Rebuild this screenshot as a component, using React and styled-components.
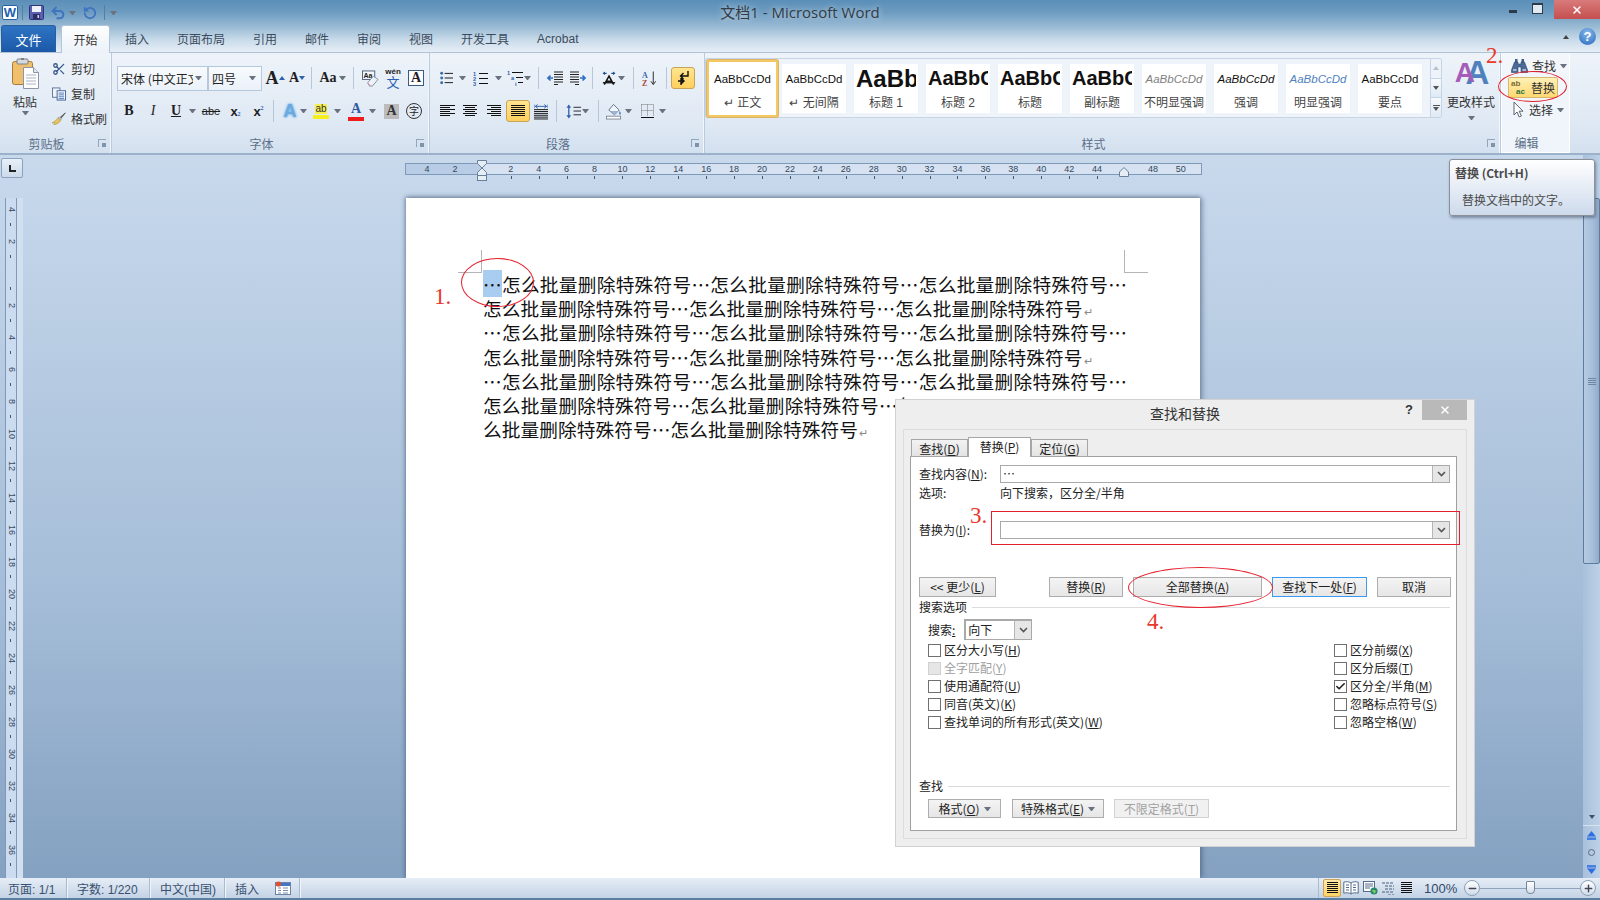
import React from "react";
import styled, { createGlobalStyle, css } from "styled-components";
import { Check, RotateCcw, Scissors, Undo2, Minus, Plus, X } from "lucide-react";

const GlobalStyle = createGlobalStyle`
  html, body { margin: 0; padding: 0; background: #fff; }
  * { box-sizing: border-box; }
`;

const UI_FONT = `"Liberation Sans", "Noto Sans CJK SC", sans-serif`;
const CJK_FONT = `"Noto Sans CJK SC", sans-serif`;

const Frame = styled.div`
  position: relative;
  width: 1600px;
  height: 900px;
  overflow: hidden;
  display: flex;
  flex-direction: column;
  font-family: ${UI_FONT};
  font-size: 12px;
  color: #333;
`;

/* ---------- title bar + tabs ---------- */

const Header = styled.div`
  height: 52px;
  flex-shrink: 0;
  background: linear-gradient(#5b8fb8 0, #6c9bc0 12px, #9dbdd6 28px, #c9dbea 40px, #e6eef6 52px);
`;

const TitleBar = styled.div`
  height: 25px;
  display: grid;
  grid-template-columns: 1fr auto 1fr;
  align-items: center;
`;

const QuickAccess = styled.div`
  display: flex;
  align-items: center;
  padding-left: 2px;
`;

const WordBadge = styled.span`
  width: 16px;
  height: 15px;
  background: #fff;
  border: 1px solid #2a62a8;
  border-radius: 2px;
  color: #1f5fb0;
  font: bold 13px/13px "Liberation Sans", sans-serif;
  text-align: center;
`;

const QatSep = styled.span`
  width: 1px;
  height: 15px;
  background: #dde8f2;
  border-right: 1px solid #567f9f;
  margin-left: ${(p) => p.$ml}px;
`;

const QatSlot = styled.span`
  display: flex;
  margin-left: ${(p) => p.$ml}px;
`;

const TitleText = styled.div`
  font-family: "Open Sans", "Noto Sans CJK SC", sans-serif;
  font-size: 15px;
  color: #333c46;
  text-shadow: 0 0 6px rgba(255, 255, 255, 0.7);
  margin-top: -2px;
`;

const WindowControls = styled.div`
  justify-self: end;
  align-self: start;
  display: flex;
  align-items: flex-start;
`;

const MinButton = styled.span`
  width: 8px;
  height: 3px;
  background: #2d3a4a;
  margin: 10px 15px 0 0;
`;

const RestoreButton = styled.span`
  width: 11px;
  height: 11px;
  border: 1px solid #2d3a4a;
  border-top-width: 2px;
  background: #dfe9f2;
  margin: 3px 11px 0 0;
`;

const CloseButton = styled.span`
  width: 46px;
  height: 19px;
  background: linear-gradient(#d97a7a, #c44f4f);
  color: #fff;
  display: flex;
  align-items: center;
  justify-content: center;
`;

const TabBar = styled.div`
  height: 27px;
  display: flex;
  align-items: stretch;
  padding-left: 1px;
  position: relative;
`;

const FileTab = styled.div`
  width: 55px;
  background: linear-gradient(#2f74c4, #1c58a8);
  border: 1px solid #2a5f9e;
  border-bottom: none;
  border-radius: 3px 3px 0 0;
  color: #fff;
  font-size: 13px;
  display: flex;
  align-items: center;
  justify-content: center;
  margin-right: 5px;
`;

const RibbonTab = styled.div`
  padding: 0 14px;
  display: flex;
  align-items: center;
  color: #3b4a5c;
  font-size: 12px;
  ${(p) =>
    p.$active &&
    css`
      width: 49px;
      padding: 0;
      justify-content: center;
      margin-right: 1px;
      color: #333;
      background: linear-gradient(#fff, #eaf1f8);
      border: 1px solid #b1c4d8;
      border-bottom: none;
      border-radius: 3px 3px 0 0;
      margin-bottom: -1px;
      position: relative;
      z-index: 1;
    `}
`;

const TabSpacer = styled.div`
  flex: 1;
`;

const HelpCluster = styled.div`
  display: flex;
  align-items: center;
  gap: 10px;
  padding: 0 4px 4px 0;
`;

const HelpBubble = styled.span`
  width: 17px;
  height: 17px;
  border-radius: 50%;
  background: radial-gradient(circle at 50% 30%, #8ab8ea, #2468bd);
  color: #fff;
  font: bold 13px/17px "Liberation Sans", sans-serif;
  text-align: center;
`;

/* ---------- ribbon ---------- */

const Ribbon = styled.div`
  height: 103px;
  flex-shrink: 0;
  display: flex;
  background: linear-gradient(#eef3f9, #dfe9f4 70%, #d3e0ef);
  border-top: 1px solid #aec3d8;
  border-bottom: 2px solid #9cb2cb;
`;

const Group = styled.div`
  width: ${(p) => p.$w}px;
  flex-shrink: 0;
  display: flex;
  flex-direction: column;
  border-right: 1px solid #b9cbdf;
  box-shadow: inset -1px 0 0 #f2f6fb;
  ${(p) =>
    p.$lit &&
    css`
      background: linear-gradient(#f3f7fc, #eef4fa);
      border: 1px solid #fff;
      border-top: none;
    `}
`;

const GroupBody = styled.div`
  flex: 1;
  min-height: 0;
  display: flex;
  flex-direction: ${(p) => p.$dir || "column"};
`;

const GroupFooter = styled.div`
  height: 20px;
  display: grid;
  grid-template-columns: 1fr 18px;
  align-items: center;
  text-align: center;
  color: #5b6f88;
  font-size: 12px;
`;

const Launcher = styled.span`
  width: 8px;
  height: 8px;
  border-left: 1px solid #93a5b9;
  border-top: 1px solid #93a5b9;
  position: relative;
  justify-self: center;
  &::after {
    content: "";
    position: absolute;
    right: 0;
    bottom: 0;
    width: 4px;
    height: 4px;
    background: #7f93a9;
  }
`;

const ToolRow = styled.div`
  height: 24px;
  display: flex;
  align-items: center;
  padding-left: ${(p) => p.$pl || 0}px;
  margin-top: ${(p) => p.$mt}px;
`;

const Tool = styled.span`
  width: ${(p) => p.$w}px;
  height: 22px;
  flex-shrink: 0;
  margin-left: ${(p) => p.$ml || 0}px;
  display: flex;
  flex-direction: ${(p) => p.$dir || "row"};
  align-items: center;
  justify-content: center;
  ${(p) =>
    p.$active &&
    css`
      background: linear-gradient(#ffe58f, #ffcf5c);
      border: 1px solid #c8a45a;
      border-radius: 3px;
    `}
`;

const Caret = styled.span`
  width: 7px;
  height: 4px;
  flex-shrink: 0;
  margin-left: ${(p) => p.$ml || 0}px;
  border-left: 3.5px solid transparent;
  border-right: 3.5px solid transparent;
  border-top: 4px solid #6a7280;
`;

const Sep = styled.span`
  width: 1px;
  height: 22px;
  flex-shrink: 0;
  margin-left: ${(p) => p.$ml || 0}px;
  background: #b6c7da;
`;

const Letter = styled.span`
  font-family: ${(p) => p.$family || `"Liberation Serif", serif`};
  font-size: ${(p) => p.$size}px;
  font-weight: ${(p) => p.$weight || "bold"};
  font-style: ${(p) => (p.$italic ? "italic" : "normal")};
  color: ${(p) => p.$color || "#1e1e1e"};
  line-height: 1;
  text-decoration: ${(p) => p.$deco || "none"};
  align-self: ${(p) => p.$align || "auto"};
  margin: ${(p) => (p.$align === "flex-start" ? "5px 0 0" : p.$align === "flex-end" ? "0 0 5px" : "0")};
  ${(p) => p.$glow && `text-shadow: 0 0 3px #6fb3ea, 0 0 2px #6fb3ea;`}
`;

const ColorBar = styled.span`
  width: 16px;
  height: 4px;
  background: ${(p) => p.$color};
  margin-top: 1px;
`;

const Marked = styled.span`
  background: #f6ef4c;
  font: 10px/10px "Liberation Sans", sans-serif;
  color: #333;
`;

const GreyChip = styled.span`
  width: 15px;
  height: 15px;
  background: #bcbcbc;
  display: flex;
  align-items: center;
  justify-content: center;
`;

const BoxChip = styled(GreyChip)`
  width: 16px;
  height: 16px;
  background: #fff;
  border: 1px solid #3c5a80;
`;

const RoundChip = styled.span`
  width: 16px;
  height: 16px;
  border: 1.5px solid #333;
  border-radius: 50%;
  font: 10px/13px ${CJK_FONT};
  text-align: center;
  color: #222;
`;

const Pinyin = styled.span`
  font: bold 8px/8px "Liberation Sans", sans-serif;
  color: #222;
`;

const PinyinChar = styled.span`
  font: 13px/12px ${CJK_FONT};
  color: #2a5db0;
`;

const Combo = styled.div`
  width: ${(p) => p.$w}px;
  height: 25px;
  background: linear-gradient(#f8fbfe, #eaf1f8);
  border: 1px solid #b6c8db;
  display: flex;
  align-items: center;
  justify-content: space-between;
  padding: 0 5px 0 3px;
  font-size: 12px;
  color: #222;
  font-family: ${CJK_FONT};
  overflow: hidden;
  white-space: nowrap;
`;

const ComboText = styled.span`
  width: ${(p) => p.$w}px;
  overflow: hidden;
`;

/* clipboard */

const PasteButton = styled.div`
  width: 50px;
  display: flex;
  flex-direction: column;
  align-items: center;
  padding-top: 5px;
`;

const PasteLabel = styled.span`
  margin-top: 6px;
  font-size: 12px;
  line-height: 16px;
  color: #333;
`;

const ClipColumn = styled.div`
  padding-top: 3px;
  display: flex;
  flex-direction: column;
`;

const ClipItem = styled.div`
  height: 25px;
  display: flex;
  align-items: center;
  gap: 5px;
  padding-left: 2px;
  color: #333;
`;

const ClipSlot = styled.span`
  width: 14px;
  display: flex;
  justify-content: center;
`;

/* style gallery */

const Gallery = styled.div`
  width: 737px;
  height: 60px;
  margin-top: 5px;
  background: #eff4fa;
  border: 1px solid #c5d5e6;
  border-radius: 2px;
  display: flex;
  align-items: center;
  padding-left: 1px;
  gap: 8px;
`;

const StyleItem = styled.div`
  width: ${(p) => (p.$active ? 71 : 64)}px;
  height: ${(p) => (p.$active ? 57 : 49)}px;
  margin-right: ${(p) => (p.$active ? -4 : 0)}px;
  background: #fff;
  flex-shrink: 0;
  display: flex;
  flex-direction: column;
  align-items: center;
  overflow: hidden;
  ${(p) =>
    p.$active &&
    css`
      border: 2px solid #f4c965;
      border-radius: 2px;
      box-shadow: 0 0 0 1px #d9b469;
    `}
`;

const StyleSample = styled.div`
  height: 30px;
  margin-top: ${(p) => (p.$active ? 2 : 0)}px;
  width: 60px;
  text-align: center;
  overflow: hidden;
  white-space: nowrap;
  display: flex;
  align-items: center;
  justify-content: ${(p) => (p.$clip ? "flex-start" : "center")};
  font-family: "Liberation Sans", sans-serif;
  font-size: ${(p) => p.$size}px;
  font-weight: ${(p) => (p.$bold ? "bold" : "normal")};
  font-style: ${(p) => (p.$italic ? "italic" : "normal")};
  color: ${(p) => p.$color || "#111"};
`;

const StyleLabel = styled.div`
  font-size: 12px;
  line-height: 18px;
  color: #444;
  white-space: nowrap;
`;

const GalleryScroller = styled.div`
  margin-left: auto;
  width: 14px;
  height: 100%;
  display: flex;
  flex-direction: column;
  border-left: 1px solid #c5d5e6;
`;

const ScrollStep = styled.div`
  flex: 1;
  display: flex;
  flex-direction: column;
  align-items: center;
  justify-content: center;
  gap: 1px;
  background: ${(p) => (p.$on ? "linear-gradient(#f7fafd,#dfe9f4)" : "#eef3f9")};
  border-bottom: 1px solid #c5d5e6;
  &:last-child {
    border-bottom: none;
  }
`;

const StepBar = styled.span`
  width: 7px;
  height: 1px;
  background: #555;
`;

const StepArrow = styled.span`
  border-left: 3px solid transparent;
  border-right: 3px solid transparent;
  ${(p) =>
    p.$up
      ? `border-bottom: 4px solid ${p.$color};`
      : `border-top: 4px solid ${p.$color};`}
`;

const StyleArea = styled.div`
  display: flex;
`;

const ChangeStyles = styled.div`
  width: 58px;
  display: flex;
  flex-direction: column;
  align-items: center;
  margin-left: 0;
  padding-top: 5px;
`;

const BigLetters = styled.div`
  display: flex;
  font: bold 33px/30px "Liberation Sans", sans-serif;
  height: 32px;
`;

const BigA = styled.span`
  color: ${(p) => p.$color};
  margin-left: ${(p) => p.$ml || 0}px;
  transform: ${(p) => (p.$small ? "scale(0.85) translateY(-1px)" : "none")};
`;

const ChangeLabel = styled.span`
  margin-top: 5px;
  line-height: 16px;
  margin-bottom: 5px;
`;

/* edit group */

const EditColumn = styled.div`
  display: flex;
  flex-direction: column;
  padding: 2px 0 0 6px;
`;

const EditItem = styled.div`
  width: ${(p) => (p.$active ? 50 : 60)}px;
  height: 21px;
  margin-top: ${(p) => p.$mt || 0}px;
  display: flex;
  align-items: center;
  gap: 4px;
  padding-left: ${(p) => p.$pl || 2}px;
  color: #333;
  white-space: nowrap;
  ${(p) =>
    p.$active &&
    css`
      background: linear-gradient(#fff1b8, #ffd870);
      border: 1px solid #d8b66c;
      border-radius: 2px;
    `}
`;

const AbAc = styled.span`
  width: 16px;
  display: flex;
  flex-direction: column;
  font: bold 8px/8px "Liberation Sans", sans-serif;
  color: #7a6a33;
`;

const AcPart = styled.span`
  color: #27733f;
  padding-left: 5px;
`;

/* ---------- workspace ---------- */

const Workspace = styled.div`
  flex: 1;
  min-height: 0;
  display: grid;
  grid-template-columns: 1fr 17px;
  background: linear-gradient(#c8d9ec, #a5bdd8 60%, #84a1c1);
`;

const DocColumn = styled.div`
  min-width: 0;
  min-height: 0;
  display: flex;
  flex-direction: column;
`;

const RulerStrip = styled.div`
  height: 43px;
  flex-shrink: 0;
  display: flex;
  align-items: flex-start;
`;

const TabStopButton = styled.div`
  width: 22px;
  height: 20px;
  margin: 3px 0 0 1px;
  background: linear-gradient(#e8f0f8, #cbdaeb);
  border: 1px solid #8ca3bd;
  border-radius: 2px;
  display: flex;
  align-items: center;
  justify-content: center;
`;

const TabStopMark = styled.span`
  width: 7px;
  height: 7px;
  border-left: 2px solid #222;
  border-bottom: 2px solid #222;
`;

const HRuler = styled.div`
  width: 797px;
  height: 12px;
  margin: 8px 0 0 382px;
  display: flex;
  padding-left: 7px;
  background: linear-gradient(90deg, #b8cde5 0 77px, #d6e2f1 77px);
  border: 1px solid #7f99b8;
  font: 9px/10px "Liberation Sans", sans-serif;
  color: #34465c;
`;

const HCell = styled.span`
  position: relative;
  width: 27.93px;
  flex-shrink: 0;
  text-align: center;
  ${(p) =>
    p.$tick &&
    css`
      &::after {
        content: "";
        position: absolute;
        left: 50%;
        top: 12px;
        width: 1px;
        height: 3px;
        background: #44586f;
      }
    `}
`;

const RulerMark = styled.svg`
  position: absolute;
  left: 8px;
  top: ${(p) => p.$top}px;
`;

const DocBody = styled.div`
  flex: 1;
  min-height: 0;
  display: flex;
`;

const VRulerBand = styled.div`
  width: 23px;
  flex-shrink: 0;
  padding-left: 5px;
  overflow: hidden;
`;

const VRuler = styled.div`
  width: 18px;
  height: 100%;
  border-right: 6px solid #d1dfef;
  background: #ccdcf0;
  box-shadow: inset 1px 0 0 #7f99b8, inset -1px 0 0 #7f99b8;
  display: flex;
  flex-direction: column;
  overflow: hidden;
  font: 9px/9px "Liberation Sans", sans-serif;
  color: #34465c;
`;

const VCell = styled.span`
  height: 32px;
  flex-shrink: 0;
  display: flex;
  align-items: center;
  justify-content: center;
  writing-mode: vertical-rl;
  position: relative;
  &:first-child {
    margin-top: -4px;
  }
  &::after {
    content: "";
    position: absolute;
    bottom: 0;
    left: 5px;
    width: 1px;
    height: 3px;
    background: #44586f;
  }
`;

const PageArea = styled.div`
  flex: 1;
  min-width: 0;
  padding-left: 383px;
`;

const Page = styled.div`
  width: 794px;
  height: 100%;
  background: #fff;
  padding: 52px 0 0 52px;
  box-shadow: -1px 0 4px rgba(60, 80, 110, 0.45), 3px 0 5px rgba(60, 80, 110, 0.35),
    0 -2px 4px rgba(60, 80, 110, 0.25);
`;

const CropRow = styled.div`
  width: 690px;
  height: 23px;
  display: flex;
  justify-content: space-between;
`;

const CropMark = styled.span`
  width: 24px;
  height: 23px;
  border-bottom: 1px solid #b5b5b5;
  ${(p) => (p.$right ? "border-left: 1px solid #b5b5b5;" : "border-right: 1px solid #b5b5b5;")}
`;

const DocText = styled.div`
  padding-left: 25px;
  margin-top: -1px;
  font-family: ${CJK_FONT};
  font-size: 18.67px;
  color: #111;
`;

const DocLine = styled.div`
  height: 24.2px;
  line-height: 24.2px;
  white-space: nowrap;
  letter-spacing: ${(p) => p.$spacing || 0}px;
`;

const Selected = styled.span`
  background: #a9cdf0;
`;

const ParaMark = styled.span`
  font-size: 11px;
  color: #8a8a8a;
  margin-left: 1px;
`;

/* scroll bar */

const ScrollBar = styled.div`
  display: flex;
  flex-direction: column;
  align-items: stretch;
  background: linear-gradient(90deg, #a9c0db, #bdd1e8);
`;

const ScrollThumb = styled.div`
  height: 366px;
  margin-top: 43px;
  flex-shrink: 0;
  background: linear-gradient(90deg, #b5cbe4, #a6bdd9 60%, #90aac8);
  border: 1px solid #5d7c9f;
  border-radius: 2px;
  display: flex;
  align-items: center;
  justify-content: center;
`;

const Grip = styled.span`
  width: 8px;
  height: 7px;
  background: repeating-linear-gradient(#6f86a1 0 1px, transparent 1px 2px);
`;

const ScrollSpacer = styled.div`
  flex: 1;
`;

const ScrollButton = styled.div`
  height: ${(p) => p.$h}px;
  display: flex;
  align-items: center;
  justify-content: center;
  border-bottom: ${(p) => (p.$line ? "1px solid #d7e2ef" : "none")};
`;

const BrowseDot = styled.span`
  width: 7px;
  height: 7px;
  border: 1px solid #5c6b80;
  border-radius: 50%;
`;

/* ---------- status bar ---------- */

const StatusBar = styled.div`
  height: 22px;
  flex-shrink: 0;
  background: linear-gradient(#e6edf6, #d3dfed 50%, #c3d2e5 91%, #5b7f9e 91%);
  display: flex;
  align-items: flex-start;
  font-size: 12px;
  color: #38506f;
`;

const StatusCell = styled.div`
  width: ${(p) => p.$w}px;
  height: 20px;
  display: flex;
  align-items: center;
  gap: 16px;
  padding-left: ${(p) => p.$pl}px;
  border-right: 1px solid #a8bbd1;
  box-shadow: 1px 0 0 #f0f5fa;
  white-space: nowrap;
`;

const StatusFill = styled.div`
  flex: 1;
`;

const ViewCluster = styled.div`
  height: 20px;
  display: flex;
  align-items: center;
  border-left: 1px solid #a8bbd1;
  padding: 0 4px;
`;

const ViewButton = styled.span`
  width: ${(p) => p.$w}px;
  height: 18px;
  flex-shrink: 0;
  display: flex;
  align-items: center;
  justify-content: center;
  ${(p) =>
    p.$active &&
    css`
      background: linear-gradient(#ffe9a6, #ffd264);
      border: 1px solid #cda457;
      border-radius: 2px;
    `}
`;

const ZoomText = styled.span`
  font-size: 13px;
  color: #33496a;
  margin-left: 9px;
  width: 40px;
`;

const ZoomRound = styled.span`
  width: 16px;
  height: 16px;
  border-radius: 50%;
  background: linear-gradient(#fff, #cfdbe9);
  border: 1px solid #8e9fb4;
  color: #445;
  display: flex;
  align-items: center;
  justify-content: center;
  flex-shrink: 0;
`;

const ZoomTrack = styled.span`
  width: 100px;
  height: 1px;
  background: #8ea2b9;
  position: relative;
`;

const ZoomKnob = styled.span`
  position: absolute;
  left: 46px;
  top: -7px;
  width: 9px;
  height: 13px;
  background: linear-gradient(#fff, #d5dfeb);
  border: 1px solid #74869c;
  border-radius: 1px 1px 4px 4px;
`;

/* ---------- find & replace dialog ---------- */

const Dialog = styled.div`
  position: absolute;
  left: 895px;
  top: 399px;
  width: 580px;
  height: 448px;
  background: #eeeeee;
  border: 1px solid #d2d2d2;
  display: flex;
  flex-direction: column;
  padding: 0 7px 7px 7px;
  font-family: ${CJK_FONT};
  font-size: 12px;
  line-height: 18px;
  color: #222;
`;

const DialogTitle = styled.div`
  height: 29px;
  flex-shrink: 0;
  display: grid;
  grid-template-columns: 1fr auto 1fr;
  align-items: center;
  padding-bottom: 3px;
  font-size: 14px;
  color: #333;
`;

const DialogTitleActions = styled.div`
  grid-column: 3;
  justify-self: end;
  align-self: start;
  display: flex;
  align-items: center;
`;

const HelpMark = styled.span`
  font: bold 13px/20px "Liberation Sans", sans-serif;
  margin-right: 9px;
  color: #333;
`;

const DialogClose = styled.span`
  width: 45px;
  height: 20px;
  background: #b9b9b9;
  color: #fff;
  display: flex;
  align-items: center;
  justify-content: center;
`;

const DialogInner = styled.div`
  flex: 1;
  min-height: 0;
  display: flex;
  flex-direction: column;
  border: 1px solid #dcdcdc;
  padding: 7px 9px 7px 6px;
`;

const DialogTabs = styled.div`
  display: flex;
  align-items: flex-end;
  height: 20px;
  padding-left: 1px;
  position: relative;
  z-index: 1;
`;

const DialogTab = styled.div`
  width: ${(p) => p.$w}px;
  height: ${(p) => (p.$active ? 20 : 18)}px;
  background: ${(p) => (p.$active ? "#fff" : "linear-gradient(#f2f2f2, #e4e4e4)")};
  border: 1px solid #a6a6a6;
  border-bottom: ${(p) => (p.$active ? "none" : "1px solid #a6a6a6")};
  text-align: center;
  line-height: 17px;
`;

const Panel = styled.div`
  flex: 1;
  min-height: 0;
  background: #fff;
  border: 1px solid #a0a0a0;
  padding: 8px 6px 0 8px;
  margin-top: -1px;
`;

const FieldRow = styled.div`
  display: grid;
  grid-template-columns: 81px 1fr;
  align-items: center;
  height: ${(p) => p.$h || 18}px;
  margin-top: ${(p) => p.$mt || 0}px;
`;

const DropBox = styled.div`
  height: 18px;
  width: ${(p) => (p.$w ? `${p.$w}px` : "auto")};
  border: 1px solid #a9a9a9;
  background: #fff;
  display: flex;
  align-items: center;
  justify-content: space-between;
  padding-left: 2px;
`;

const DropArrow = styled.span`
  width: 17px;
  height: 100%;
  background: #e6e6e6;
  border-left: 1px solid #b5b5b5;
  display: flex;
  align-items: center;
  justify-content: center;
  color: #555;
`;

const ButtonRow = styled.div`
  display: flex;
  align-items: center;
  margin-top: ${(p) => p.$mt}px;
  padding-left: ${(p) => p.$pl || 0}px;
`;

const DlgButton = styled.div`
  width: ${(p) => p.$w}px;
  height: ${(p) => p.$h || 20}px;
  margin-left: ${(p) => p.$ml || 0}px;
  flex-shrink: 0;
  border: 1px solid ${(p) => (p.$focus ? "#3c9bf0" : p.$off ? "#d2d2d2" : "#adadad")};
  background: ${(p) => (p.$off ? "#f1f1f1" : "linear-gradient(#f4f4f4, #e6e6e6)")};
  color: ${(p) => (p.$off ? "#a2a2a2" : "#222")};
  display: flex;
  align-items: center;
  justify-content: center;
  gap: 4px;
  white-space: nowrap;
`;

const SectionHead = styled.div`
  display: flex;
  align-items: center;
  gap: 5px;
  height: 18px;
  margin-top: ${(p) => p.$mt}px;
  &::after {
    content: "";
    flex: 1;
    height: 1px;
    background: #dcdcdc;
  }
`;

const SearchRow = styled.div`
  display: flex;
  align-items: center;
  gap: 9px;
  margin-top: 3px;
  padding-left: 9px;
`;

const SearchSelect = styled(DropBox)`
  height: 21px;
  border-width: 2px 1px 1px 2px;
`;

const ChecksGrid = styled.div`
  display: grid;
  grid-template-columns: 406px 1fr;
  margin-top: 1px;
  padding-left: 9px;
`;

const CheckRow = styled.div`
  height: 18px;
  display: flex;
  align-items: center;
  gap: 3px;
  color: ${(p) => (p.$off ? "#a0a0a0" : "#222")};
`;

const CheckBox = styled.span`
  width: 13px;
  height: 13px;
  flex-shrink: 0;
  border: 1px solid ${(p) => (p.$off ? "#d0d0d0" : "#707070")};
  background: ${(p) => (p.$off ? "#e6e6e6" : "#fff")};
  display: flex;
  align-items: center;
  justify-content: center;
`;

const Accel = styled.u`
  text-underline-offset: 1px;
`;

/* ---------- tooltip ---------- */

const Tooltip = styled.div`
  position: absolute;
  left: 1449px;
  top: 159px;
  width: 146px;
  height: 57px;
  border: 1px solid #8a8f98;
  border-radius: 3px;
  background: linear-gradient(#fff, #cddaec);
  box-shadow: 1px 2px 3px rgba(40, 50, 70, 0.45);
  padding: 4px 0 0 5px;
  color: #4a4a4a;
  font-family: ${CJK_FONT};
  font-size: 12px;
  line-height: 18px;
`;

const TooltipTitle = styled.div`
  font-weight: bold;
`;

const TooltipText = styled.div`
  margin: 9px 0 0 7px;
`;

/* ---------- red notes drawn on the screenshot ---------- */

const NoteNumber = styled.span`
  position: absolute;
  left: ${(p) => p.$x}px;
  top: ${(p) => p.$y}px;
  font: 23px/26px "Liberation Serif", serif;
  color: #e8392a;
  z-index: 5;
`;

const NoteRing = styled.span`
  position: absolute;
  left: ${(p) => p.$x}px;
  top: ${(p) => p.$y}px;
  width: ${(p) => p.$w}px;
  height: ${(p) => p.$h}px;
  border: 1px solid #e5202e;
  border-radius: ${(p) => (p.$square ? 0 : "50%")};
  z-index: 5;
`;

/* ---------- drawings ---------- */

const SaveIcon = () => (
  <svg width="15" height="15" viewBox="0 0 15 15">
    <rect x="0.5" y="0.5" width="14" height="14" rx="1" fill="#5a5fb0" stroke="#2f3478" />
    <rect x="3" y="1" width="9" height="6" fill="#eef0fa" />
    <rect x="4" y="9" width="7" height="5" fill="#2b2f66" />
    <rect x="8.5" y="10" width="1.6" height="3" fill="#cfd3ee" />
  </svg>
);

const PasteIcon = () => (
  <svg width="27" height="31" viewBox="0 0 27 31">
    <rect x="0.5" y="3.5" width="20" height="23" rx="2" fill="#f0bf6d" stroke="#a67c37" />
    <rect x="5" y="1" width="11" height="5" rx="1" fill="#d6d9de" stroke="#7a7f88" />
    <rect x="9" y="0" width="3" height="2" fill="#7a7f88" />
    <path d="M11.5 9.5h10l5 5v16h-15z" fill="#fff" stroke="#8b97a8" />
    <path d="M21.5 9.5v5h5" fill="#dfe6ee" stroke="#8b97a8" />
    <path d="M14 17h10M14 20h10M14 23h10M14 26h10" stroke="#a8b3c2" />
  </svg>
);

const CopyIcon = () => (
  <svg width="15" height="14" viewBox="0 0 15 14">
    <rect x="0.5" y="0.5" width="8" height="10" fill="#eef3fa" stroke="#5b7497" />
    <rect x="5.5" y="3.5" width="9" height="10" fill="#fff" stroke="#3f6096" />
    <path d="M7 6h6M7 8h6M7 10h6M7 12h6" stroke="#3f6db0" />
  </svg>
);

const BrushIcon = () => (
  <svg width="16" height="15" viewBox="0 0 16 15">
    <path d="M9 6l6-5.5 .8 .8L10.5 7.5z" fill="#5a5a5a" />
    <path d="M8.5 5.5l2.5 2.5-1.5 1.5-2.5-2.5z" fill="#c7ccd4" stroke="#777" strokeWidth=".5" />
    <path d="M7 6.5l3 3c-1.5 3-4 4.5-8 5 .8-.8 1-1.5 1-2.2l-3 .4c2.5-1.5 5-3.5 7-6.2z" fill="#e6c35a" stroke="#9a7b2b" strokeWidth=".5" />
  </svg>
);

const ClearIcon = () => (
  <svg width="18" height="17" viewBox="0 0 18 17">
    <rect x="0.5" y="0.5" width="13" height="9" fill="#f3f6fa" stroke="#4d6079" />
    <text x="1.6" y="8" fontSize="7.5" fontWeight="bold" fontFamily="Liberation Sans" fill="#222">Aa</text>
    <path d="M6 13l6-7 5 3.5-6 7h-3z" fill="#eef1f6" stroke="#7c8ea6" />
    <path d="M6 13l3 3.5" stroke="#e38aa0" />
  </svg>
);

const Bullets = () => (
  <svg width="14" height="14" viewBox="0 0 14 14">
    {[2, 7, 12].map((y) => (
      <g key={y}>
        <circle cx="1.8" cy={y} r="1.6" fill="#3c6ea8" />
        <rect x="5" y={y - 0.5} width="9" height="1" fill="#111" />
      </g>
    ))}
  </svg>
);

const Numbers = () => (
  <svg width="15" height="15" viewBox="0 0 15 15">
    {[1, 2, 3].map((n) => (
      <g key={n}>
        <text x="0" y={n * 5 - 0.2} fontSize="5.6" fontWeight="bold" fontFamily="Liberation Sans" fill="#2f62a8">{n}</text>
        <rect x="6" y={n * 5 - 3} width="9" height="1" fill="#111" />
      </g>
    ))}
  </svg>
);

const MultiLevel = () => (
  <svg width="16" height="16" viewBox="0 0 16 16">
    <text x="0" y="5" fontSize="5.6" fontWeight="bold" fontFamily="Liberation Sans" fill="#2f62a8">1</text>
    <rect x="5" y="2" width="11" height="1" fill="#111" />
    <text x="4" y="10" fontSize="5.6" fontWeight="bold" fontFamily="Liberation Sans" fill="#2f62a8">a</text>
    <rect x="9" y="7" width="7" height="1" fill="#111" />
    <text x="8" y="15.5" fontSize="5.6" fontWeight="bold" fontFamily="Liberation Sans" fill="#2f62a8">i</text>
    <rect x="11" y="12" width="5" height="1" fill="#111" />
  </svg>
);

const IndentIcon = ({ flip }) => (
  <svg width="16" height="14" viewBox="0 0 16 14" style={flip ? { transform: "scaleX(-1)" } : undefined}>
    <path d="M7 1h9M7 3.5h9M7 6h9M7 8.5h9M7 11h9M7 13.5h4" stroke="#222" />
    <path d="M6 7H1m2.5-2.5L1 7l2.5 2.5" stroke="#2f6ec4" strokeWidth="1.6" fill="none" />
  </svg>
);

const TextDirIcon = () => (
  <svg width="17" height="15" viewBox="0 0 17 15">
    <path d="M2 2h4M15 2h-4" stroke="#1f4e96" strokeWidth="1.2" />
    <path d="M2 2l2.2-2v4zM15 2l-2.2-2v4z" fill="#1f4e96" />
    <path d="M2 12h13" stroke="#111" strokeWidth="1.4" />
    <path d="M3.5 14l5-9 5 9M5.5 10.5h6" stroke="#111" strokeWidth="1.6" fill="none" />
  </svg>
);

const SortIcon = () => (
  <svg width="16" height="17" viewBox="0 0 16 17">
    <text x="0" y="7.5" fontSize="8.5" fontWeight="bold" fontFamily="Liberation Serif" fill="#3a6aa8">A</text>
    <text x="0" y="16" fontSize="8.5" fontWeight="bold" fontFamily="Liberation Serif" fill="#a84a3c">Z</text>
    <path d="M12 1v13" stroke="#222" />
    <path d="M9.5 11.5L12 15l2.5-3.5" stroke="#222" fill="none" />
  </svg>
);

const MarksIcon = () => (
  <svg width="14" height="16" viewBox="0 0 14 16">
    <path d="M12 1v5H5M7.5 3L4.5 6l3 3" stroke="#111" strokeWidth="1.4" fill="none" />
    <path d="M2 11h6M5.5 8.5L8 11l-2.5 2.5M5 8v7" stroke="#111" strokeWidth="1.4" fill="none" />
  </svg>
);

const LinesIcon = ({ widths, align = "left", w = 15, gap = 2 }) => (
  <svg width={w} height={widths.length * gap} viewBox={`0 0 ${w} ${widths.length * gap}`}>
    {widths.map((lw, i) => (
      <rect
        key={i}
        x={align === "left" ? 0 : align === "right" ? w - lw : (w - lw) / 2}
        y={i * gap}
        width={lw}
        height="1"
        fill="#111"
      />
    ))}
  </svg>
);

const DistributeIcon = () => (
  <svg width="15" height="17" viewBox="0 0 15 17">
    <path d="M0 1v4M15 1v4" stroke="#2f62a8" />
    <path d="M1 3h13M4 1L1.5 3 4 5M11 1l2.5 2-2.5 2" stroke="#2f62a8" fill="none" />
    {[6, 8, 10, 12, 14, 16].map((y) => (
      <rect key={y} x="0" y={y} width="15" height="1" fill="#111" />
    ))}
  </svg>
);

const SpacingIcon = () => (
  <svg width="16" height="17" viewBox="0 0 16 17">
    <path d="M3 3v11" stroke="#2f62a8" strokeWidth="1.4" />
    <path d="M0.5 4.5L3 1l2.5 3.5zM0.5 12.5L3 16l2.5-3.5z" fill="#2f62a8" />
    <path d="M8 4h8M8 8h8M8 12h8" stroke="#222" />
  </svg>
);

const ShadingIcon = () => (
  <svg width="17" height="17" viewBox="0 0 17 17">
    <path d="M3 7l5-6 6 6-5 5z" fill="#f2f5fa" stroke="#5a6f8c" />
    <path d="M4 8h9l-4 4z" fill="#9fb4d0" />
    <path d="M14.5 8c1 1.5 1.5 2.5 1 3.5-.7 .7-1.7 0-1.5-1z" fill="#3f6fb0" />
    <rect x="0.5" y="13.5" width="15" height="3" fill="#fff" stroke="#7e8a98" />
  </svg>
);

const BorderIcon = () => (
  <svg width="13" height="14" viewBox="0 0 13 14">
    <path d="M.5 .5h12M.5 .5v12M12.5 .5v12M6.5 .5v12M.5 6.5h12" stroke="#777" strokeDasharray="1 1" fill="none" />
    <path d="M0 13.5h13" stroke="#111" />
  </svg>
);

const Binoculars = () => (
  <svg width="17" height="15" viewBox="0 0 17 15">
    <path d="M4 1h2.5v3h-2.5zM10.5 1H13v3h-2.5z" fill="#3f5f8c" />
    <path d="M3.5 4h3.5v2h3v-2h3.5l3 8v2.5H10V9H7v5.5H.5V12z" fill="#4b6a98" stroke="#2e466c" strokeWidth=".6" />
    <path d="M2 12h3.5M11.5 12H15" stroke="#c9d6e8" strokeWidth="1.4" />
  </svg>
);

const PointerIcon = () => (
  <svg width="12" height="17" viewBox="0 0 12 17">
    <path d="M1 1v13l3-3 2.2 5 2.2-1-2.2-4.8H10z" fill="#fff" stroke="#5a6573" strokeLinejoin="round" />
  </svg>
);

const MacroIcon = () => (
  <svg width="16" height="14" viewBox="0 0 16 14">
    <rect x="0.5" y="1.5" width="15" height="12" fill="#fff" stroke="#6a82a4" />
    <rect x="1" y="2" width="14" height="3" fill="#3f78c8" />
    <path d="M3 7h3M8 7h5M3 9.5h3M8 9.5h5M3 12h3M8 12h5" stroke="#7a8da6" />
    <circle cx="3.5" cy="3" r="2.6" fill="#e2502a" />
  </svg>
);

const BookIcon = () => (
  <svg width="16" height="14" viewBox="0 0 16 14">
    <path d="M8 2C6 .5 3 .5 .8 1.2v11C3 11.5 6 11.5 8 13c2-1.5 5-1.5 7.2-.8v-11C13 .5 10 .5 8 2z" fill="#fff" stroke="#546b8a" />
    <path d="M8 2v11M3 4h3M3 6.5h3M3 9h3M10 4h3M10 6.5h3M10 9h3" stroke="#546b8a" />
  </svg>
);

const WebIcon = () => (
  <svg width="15" height="14" viewBox="0 0 15 14">
    <rect x="0.5" y="0.5" width="11" height="10" fill="#fff" stroke="#546b8a" />
    <path d="M2 3h8M2 5h8M2 7h5" stroke="#546b8a" />
    <circle cx="11" cy="10" r="3.6" fill="#2a8a6d" />
    <path d="M9 9h3l1 2-2 1.5z" fill="#7ccf5e" />
  </svg>
);

const OutlineIcon = () => (
  <svg width="12" height="13" viewBox="0 0 12 13">
    <path d="M0 1h12M3 4h9M3 7h9M0 10h12M6 13h6" stroke="#49607f" strokeDasharray="3 1" />
  </svg>
);

const DoubleArrow = ({ up }) => (
  <svg width="9" height="9" viewBox="0 0 9 9" style={up ? undefined : { transform: "scaleY(-1)" }}>
    <path d="M0 8h9" stroke="#2f6ee0" strokeWidth="1.6" />
    <path d="M4.5 0L8.5 5H.5z" fill="#2f6ee0" />
    <path d="M0 6h9" stroke="#2f6ee0" />
  </svg>
);

const Hourglass = () => (
  <RulerMark $top={-4} width="10" height="21" viewBox="0 0 10 21">
    <path d="M.5 .5h9v3L5 8 .5 3.5z" fill="#e6edf5" stroke="#69809c" />
    <path d="M5 8l4.5 4.5v3h-9v-3z" fill="#e6edf5" stroke="#69809c" />
    <rect x=".5" y="15.5" width="9" height="5" fill="#e6edf5" stroke="#69809c" />
  </RulerMark>
);

const RightIndent = () => (
  <RulerMark $top={3} width="10" height="10" viewBox="0 0 10 10">
    <path d="M5 .5l4.5 4.5v4.5h-9V5z" fill="#e6edf5" stroke="#69809c" />
  </RulerMark>
);

/* ---------- data ---------- */

const GALLERY = [
  { sample: "AaBbCcDd", label: "↵ 正文", size: 11.5, active: true },
  { sample: "AaBbCcDd", label: "↵ 无间隔", size: 11.5 },
  { sample: "AaBbCc", label: "标题 1", size: 24, bold: true, clip: true },
  { sample: "AaBbCc", label: "标题 2", size: 20, bold: true, clip: true },
  { sample: "AaBbCc", label: "标题", size: 20, bold: true, clip: true },
  { sample: "AaBbCc", label: "副标题", size: 20, bold: true, clip: true },
  { sample: "AaBbCcDd", label: "不明显强调", size: 11.5, italic: true, color: "#808080" },
  { sample: "AaBbCcDd", label: "强调", size: 11.5, italic: true },
  { sample: "AaBbCcDd", label: "明显强调", size: 11.5, italic: true, color: "#4f81bd" },
  { sample: "AaBbCcDd", label: "要点", size: 11.5 },
];

const TABS = ["插入", "页面布局", "引用", "邮件", "审阅", "视图", "开发工具", "Acrobat"];
const H_NUMBERS = [4, 2, 0, ...Array.from({ length: 22 }, (_, i) => (i + 1) * 2), "", 48, 50];
const V_NUMBERS = [4, 2, "", ...Array.from({ length: 18 }, (_, i) => (i + 1) * 2), ""];
const PHRASE = "怎么批量删除特殊符号";
const FULL_LINE = `…${PHRASE}…${PHRASE}…${PHRASE}…`;
const LEFT_CHECKS = [
  { text: "区分大小写", key: "H" },
  { text: "全字匹配", key: "Y", off: true },
  { text: "使用通配符", key: "U" },
  { text: "同音(英文)", key: "K" },
  { text: "查找单词的所有形式(英文)", key: "W" },
];
const RIGHT_CHECKS = [
  { text: "区分前缀", key: "X" },
  { text: "区分后缀", key: "T" },
  { text: "区分全/半角", key: "M", checked: true },
  { text: "忽略标点符号", key: "S" },
  { text: "忽略空格", key: "W" },
];

const CheckLine = ({ item }) => (
  <CheckRow $off={item.off}>
    <CheckBox $off={item.off}>
      {item.checked && <Check size={11} strokeWidth={3.5} color="#222" />}
    </CheckBox>
    <span>
      {item.text}(<Accel>{item.key}</Accel>)
    </span>
  </CheckRow>
);

const ChevronDown = () => (
  <svg width="9" height="6" viewBox="0 0 9 6">
    <path d="M1 1l3.5 3.5L8 1" stroke="#555" strokeWidth="1.6" fill="none" />
  </svg>
);

export default function App() {
  return (
    <Frame lang="zh-CN">
      <GlobalStyle />

      <Header>
        <TitleBar>
          <QuickAccess>
            <WordBadge>W</WordBadge>
            <QatSep $ml={4} />
            <QatSlot $ml={6}>
              <SaveIcon />
            </QatSlot>
            <QatSlot $ml={6}>
              <Undo2 size={16} strokeWidth={3} color="#3f73c0" />
            </QatSlot>
            <Caret $ml={3} />
            <QatSlot $ml={7}>
              <RotateCcw size={14} strokeWidth={3} color="#3f73c0" />
            </QatSlot>
            <QatSep $ml={7} />
            <Caret $ml={5} />
          </QuickAccess>
          <TitleText>文档1 - Microsoft Word</TitleText>
          <WindowControls>
            <MinButton />
            <RestoreButton />
            <CloseButton>
              <X size={12} strokeWidth={3} />
            </CloseButton>
          </WindowControls>
        </TitleBar>
        <TabBar>
          <FileTab>文件</FileTab>
          <RibbonTab $active>开始</RibbonTab>
          {TABS.map((t) => (
            <RibbonTab key={t}>{t}</RibbonTab>
          ))}
          <TabSpacer />
          <HelpCluster>
            <StepArrow $up $color="#444" />
            <HelpBubble>?</HelpBubble>
          </HelpCluster>
        </TabBar>
      </Header>

      <Ribbon>
        <Group $w={112}>
          <GroupBody $dir="row">
            <PasteButton>
              <PasteIcon />
              <PasteLabel>粘贴</PasteLabel>
              <Caret $ml={0} />
            </PasteButton>
            <ClipColumn>
              <ClipItem>
                <ClipSlot>
                  <Scissors size={14} color="#35578a" strokeWidth={2.2} />
                </ClipSlot>
                剪切
              </ClipItem>
              <ClipItem>
                <ClipSlot>
                  <CopyIcon />
                </ClipSlot>
                复制
              </ClipItem>
              <ClipItem>
                <ClipSlot>
                  <BrushIcon />
                </ClipSlot>
                格式刷
              </ClipItem>
            </ClipColumn>
          </GroupBody>
          <GroupFooter>
            剪贴板
            <Launcher />
          </GroupFooter>
        </Group>

        <Group $w={318}>
          <GroupBody>
            <ToolRow $pl={5} $mt={13}>
              <Combo $w={91}>
                <ComboText $w={72}>宋体 (中文正文)</ComboText>
                <Caret />
              </Combo>
              <Combo $w={54}>
                四号
                <Caret />
              </Combo>
              <Tool $w={16} $ml={5}>
                <Letter $size={18}>A</Letter>
                <StepArrow $up $color="#2d62a8" />
              </Tool>
              <Tool $w={14} $ml={7}>
                <Letter $size={14}>A</Letter>
                <StepArrow $color="#2d62a8" />
              </Tool>
              <Sep $ml={7} />
              <Tool $w={16} $ml={8}>
                <Letter $size={14}>Aa</Letter>
              </Tool>
              <Caret $ml={3} />
              <Sep $ml={7} />
              <Tool $w={17} $ml={8}>
                <ClearIcon />
              </Tool>
              <Tool $w={16} $ml={6} $dir="column">
                <Pinyin>wén</Pinyin>
                <PinyinChar>文</PinyinChar>
              </Tool>
              <Tool $w={16} $ml={7}>
                <BoxChip>
                  <Letter $size={14}>A</Letter>
                </BoxChip>
              </Tool>
            </ToolRow>
            <ToolRow $pl={5} $mt={9}>
              <Tool $w={10} $ml={7}>
                <Letter $size={14}>B</Letter>
              </Tool>
              <Tool $w={10} $ml={14}>
                <Letter $size={14} $italic $weight="normal">I</Letter>
              </Tool>
              <Tool $w={10} $ml={13}>
                <Letter $size={14} $deco="underline">U</Letter>
              </Tool>
              <Caret $ml={8} />
              <Tool $w={16} $ml={7}>
                <Letter $size={11} $family={`"Liberation Sans", sans-serif`} $weight="normal" $deco="line-through">abe</Letter>
              </Tool>
              <Tool $w={13} $ml={10}>
                <Letter $size={13} $family={`"Liberation Sans", sans-serif`}>x</Letter>
                <Letter $size={6} $color="#2d62a8" $align="flex-end">2</Letter>
              </Tool>
              <Tool $w={13} $ml={10}>
                <Letter $size={13} $family={`"Liberation Sans", sans-serif`}>x</Letter>
                <Letter $size={6} $color="#2d62a8" $align="flex-start">2</Letter>
              </Tool>
              <Sep $ml={8} />
              <Tool $w={16} $ml={8}>
                <Letter $size={18} $family={`"Liberation Sans", sans-serif`} $color="#6ea9de" $glow>A</Letter>
              </Tool>
              <Caret $ml={2} />
              <Tool $w={16} $ml={6} $dir="column">
                <Marked>ab</Marked>
                <ColorBar $color="#f6ef20" />
              </Tool>
              <Caret $ml={5} />
              <Tool $w={16} $ml={7} $dir="column">
                <Letter $size={14} $color="#2c5aa0">A</Letter>
                <ColorBar $color="#ee1c1c" />
              </Tool>
              <Caret $ml={5} />
              <Tool $w={15} $ml={8}>
                <GreyChip>
                  <Letter $size={14} $color="#333">A</Letter>
                </GreyChip>
              </Tool>
              <Tool $w={16} $ml={7}>
                <RoundChip>字</RoundChip>
              </Tool>
            </ToolRow>
          </GroupBody>
          <GroupFooter>
            字体
            <Launcher />
          </GroupFooter>
        </Group>

        <Group $w={275}>
          <GroupBody>
            <ToolRow $mt={13}>
              <Tool $w={13} $ml={10}><Bullets /></Tool>
              <Caret $ml={6} />
              <Tool $w={15} $ml={7}><Numbers /></Tool>
              <Caret $ml={7} />
              <Tool $w={16} $ml={5}><MultiLevel /></Tool>
              <Caret $ml={1} />
              <Sep $ml={7} />
              <Tool $w={16} $ml={8}><IndentIcon /></Tool>
              <Tool $w={16} $ml={7}><IndentIcon flip /></Tool>
              <Sep $ml={6} />
              <Tool $w={16} $ml={8}><TextDirIcon /></Tool>
              <Caret $ml={1} />
              <Sep $ml={8} />
              <Tool $w={15} $ml={8}><SortIcon /></Tool>
              <Sep $ml={9} />
              <Tool $w={24} $ml={4} $active><MarksIcon /></Tool>
            </ToolRow>
            <ToolRow $mt={9}>
              <Tool $w={15} $ml={10}><LinesIcon widths={[15, 10, 15, 10, 15, 10]} /></Tool>
              <Tool $w={14} $ml={8}><LinesIcon w={14} widths={[14, 10, 14, 10, 14, 10]} align="center" /></Tool>
              <Tool $w={14} $ml={10}><LinesIcon w={14} widths={[14, 10, 14, 10, 14, 10]} align="right" /></Tool>
              <Tool $w={24} $ml={5} $active><LinesIcon w={14} widths={[14, 14, 14, 14, 14, 14]} /></Tool>
              <Tool $w={14} $ml={4}><DistributeIcon /></Tool>
              <Sep $ml={8} />
              <Tool $w={15} $ml={9}><SpacingIcon /></Tool>
              <Caret $ml={1} />
              <Sep $ml={9} />
              <Tool $w={16} $ml={7}><ShadingIcon /></Tool>
              <Caret $ml={3} />
              <Tool $w={13} $ml={9}><BorderIcon /></Tool>
              <Caret $ml={5} />
            </ToolRow>
          </GroupBody>
          <GroupFooter>
            段落
            <Launcher />
          </GroupFooter>
        </Group>

        <Group $w={796}>
          <GroupBody>
            <StyleArea>
              <Gallery>
                {GALLERY.map((s) => (
                  <StyleItem key={s.label} $active={s.active}>
                    <StyleSample
                      $active={s.active}
                      $size={s.size}
                      $bold={s.bold}
                      $italic={s.italic}
                      $color={s.color}
                      $clip={s.clip}
                    >
                      {s.sample}
                    </StyleSample>
                    <StyleLabel>{s.label}</StyleLabel>
                  </StyleItem>
                ))}
                <GalleryScroller>
                  <ScrollStep>
                    <StepArrow $up $color="#b5c1cf" />
                  </ScrollStep>
                  <ScrollStep $on>
                    <StepArrow $color="#555" />
                  </ScrollStep>
                  <ScrollStep $on>
                    <StepBar />
                    <StepArrow $color="#555" />
                  </ScrollStep>
                </GalleryScroller>
              </Gallery>
              <ChangeStyles>
                <BigLetters>
                  <BigA $color="#a45cb8" $small>A</BigA>
                  <BigA $color="#4f81bd" $ml={-11}>A</BigA>
                </BigLetters>
                <ChangeLabel>更改样式</ChangeLabel>
                <Caret />
              </ChangeStyles>
            </StyleArea>
          </GroupBody>
          <GroupFooter>
            样式
            <Launcher />
          </GroupFooter>
        </Group>

        <Group $w={69} $lit>
          <GroupBody>
            <EditColumn>
              <EditItem $pl={3}>
                <Binoculars />
                查找
                <Caret />
              </EditItem>
              <EditItem $active $mt={1}>
                <AbAc>
                  ab
                  <AcPart>ac</AcPart>
                </AbAc>
                替换
              </EditItem>
              <EditItem $mt={1} $pl={5}>
                <PointerIcon />
                选择
                <Caret />
              </EditItem>
            </EditColumn>
          </GroupBody>
          <GroupFooter>
            编辑
            <span />
          </GroupFooter>
        </Group>
      </Ribbon>

      <Workspace>
        <DocColumn>
          <RulerStrip>
            <TabStopButton>
              <TabStopMark />
            </TabStopButton>
            <HRuler>
              {H_NUMBERS.map((n, i) => (
                <HCell key={i} $tick={i > 2 && i < 25}>
                  {n === 0 ? <Hourglass /> : n === "" ? <RightIndent /> : n}
                </HCell>
              ))}
            </HRuler>
          </RulerStrip>
          <DocBody>
            <VRulerBand>
              <VRuler>
                {V_NUMBERS.map((n, i) => (
                  <VCell key={i}>{n}</VCell>
                ))}
              </VRuler>
            </VRulerBand>
            <PageArea>
              <Page>
                <CropRow>
                  <CropMark />
                  <CropMark $right />
                </CropRow>
                <DocText>
                  <DocLine $spacing={0.29}>
                    <Selected>…</Selected>
                    {`${PHRASE}…${PHRASE}…${PHRASE}…`}
                  </DocLine>
                  <DocLine $spacing={0.08}>
                    {`${PHRASE}…${PHRASE}…${PHRASE}`}
                    <ParaMark>↵</ParaMark>
                  </DocLine>
                  <DocLine $spacing={0.29}>{FULL_LINE}</DocLine>
                  <DocLine $spacing={0.08}>
                    {`${PHRASE}…${PHRASE}…${PHRASE}`}
                    <ParaMark>↵</ParaMark>
                  </DocLine>
                  <DocLine $spacing={0.29}>{FULL_LINE}</DocLine>
                  <DocLine $spacing={0.2}>{`${PHRASE}…${PHRASE}…怎`}</DocLine>
                  <DocLine $spacing={0.1}>
                    {`么批量删除特殊符号…${PHRASE}`}
                    <ParaMark>↵</ParaMark>
                  </DocLine>
                </DocText>
              </Page>
            </PageArea>
          </DocBody>
        </DocColumn>

        <ScrollBar>
          <ScrollThumb>
            <Grip />
          </ScrollThumb>
          <ScrollSpacer />
          <ScrollButton $h={17} $line>
            <StepArrow $color="#3f4f6a" />
          </ScrollButton>
          <ScrollButton $h={18}>
            <DoubleArrow up />
          </ScrollButton>
          <ScrollButton $h={16}>
            <BrowseDot />
          </ScrollButton>
          <ScrollButton $h={18}>
            <DoubleArrow />
          </ScrollButton>
        </ScrollBar>
      </Workspace>

      <StatusBar>
        <StatusCell $w={67} $pl={8}>页面: 1/1</StatusCell>
        <StatusCell $w={83} $pl={10}>字数: 1/220</StatusCell>
        <StatusCell $w={75} $pl={10}>中文(中国)</StatusCell>
        <StatusCell $w={75} $pl={10}>
          插入
          <MacroIcon />
        </StatusCell>
        <StatusFill />
        <ViewCluster>
          <ViewButton $w={18} $active>
            <LinesIcon w={11} widths={[11, 11, 11, 11, 11, 11]} />
          </ViewButton>
          <ViewButton $w={20}><BookIcon /></ViewButton>
          <ViewButton $w={18}><WebIcon /></ViewButton>
          <ViewButton $w={18}><OutlineIcon /></ViewButton>
          <ViewButton $w={18}>
            <LinesIcon w={11} widths={[11, 11, 11, 11, 11, 11]} />
          </ViewButton>
          <ZoomText>100%</ZoomText>
          <ZoomRound>
            <Minus size={11} strokeWidth={3} />
          </ZoomRound>
          <ZoomTrack>
            <ZoomKnob />
          </ZoomTrack>
          <ZoomRound>
            <Plus size={11} strokeWidth={3} />
          </ZoomRound>
        </ViewCluster>
      </StatusBar>

      <Tooltip>
        <TooltipTitle>替换 (Ctrl+H)</TooltipTitle>
        <TooltipText>替换文档中的文字。</TooltipText>
      </Tooltip>

      <Dialog>
        <DialogTitle>
          <span />
          查找和替换
          <DialogTitleActions>
            <HelpMark>?</HelpMark>
            <DialogClose>
              <X size={12} strokeWidth={3} />
            </DialogClose>
          </DialogTitleActions>
        </DialogTitle>
        <DialogInner>
          <DialogTabs>
            <DialogTab $w={57}>查找(<Accel>D</Accel>)</DialogTab>
            <DialogTab $w={63} $active>替换(<Accel>P</Accel>)</DialogTab>
            <DialogTab $w={57}>定位(<Accel>G</Accel>)</DialogTab>
          </DialogTabs>
          <Panel>
            <FieldRow>
              <span>查找内容(<Accel>N</Accel>):</span>
              <DropBox>
                …
                <DropArrow><ChevronDown /></DropArrow>
              </DropBox>
            </FieldRow>
            <FieldRow $h={20}>
              <span>选项:</span>
              <span>向下搜索，区分全/半角</span>
            </FieldRow>
            <FieldRow $mt={18}>
              <span>替换为(<Accel>I</Accel>):</span>
              <DropBox>
                <span />
                <DropArrow><ChevronDown /></DropArrow>
              </DropBox>
            </FieldRow>
            <ButtonRow $mt={38}>
              <DlgButton $w={77}><span>&lt;&lt; 更少(<Accel>L</Accel>)</span></DlgButton>
              <DlgButton $w={74} $ml={53}><span>替换(<Accel>R</Accel>)</span></DlgButton>
              <DlgButton $w={129} $ml={10}><span>全部替换(<Accel>A</Accel>)</span></DlgButton>
              <DlgButton $w={95} $ml={10} $focus><span>查找下一处(<Accel>F</Accel>)</span></DlgButton>
              <DlgButton $w={74} $ml={10}>取消</DlgButton>
            </ButtonRow>
            <SectionHead $mt={1}>搜索选项</SectionHead>
            <SearchRow>
              <span>搜索<Accel>:</Accel></span>
              <SearchSelect $w={68}>
                向下
                <DropArrow><ChevronDown /></DropArrow>
              </SearchSelect>
            </SearchRow>
            <ChecksGrid>
              <div>
                {LEFT_CHECKS.map((c) => (
                  <CheckLine key={c.text} item={c} />
                ))}
              </div>
              <div>
                {RIGHT_CHECKS.map((c) => (
                  <CheckLine key={c.text} item={c} />
                ))}
              </div>
            </ChecksGrid>
            <SectionHead $mt={46}>查找</SectionHead>
            <ButtonRow $mt={4} $pl={9}>
              <DlgButton $w={73} $h={19}><span>格式(<Accel>O</Accel>)</span><Caret /></DlgButton>
              <DlgButton $w={92} $h={19} $ml={11}><span>特殊格式(<Accel>E</Accel>)</span><Caret /></DlgButton>
              <DlgButton $w={95} $h={19} $ml={10} $off><span>不限定格式(<Accel>T</Accel>)</span></DlgButton>
            </ButtonRow>
          </Panel>
        </DialogInner>
      </Dialog>

      <NoteRing $x={461} $y={258} $w={73} $h={49} />
      <NoteNumber $x={434} $y={284}>1.</NoteNumber>
      <NoteRing $x={1498} $y={71} $w={69} $h={31} />
      <NoteNumber $x={1486} $y={43}>2.</NoteNumber>
      <NoteRing $x={991} $y={511} $w={469} $h={34} $square />
      <NoteNumber $x={970} $y={503}>3.</NoteNumber>
      <NoteRing $x={1128} $y={567} $w={145} $h={41} />
      <NoteNumber $x={1147} $y={609}>4.</NoteNumber>
    </Frame>
  );
}
